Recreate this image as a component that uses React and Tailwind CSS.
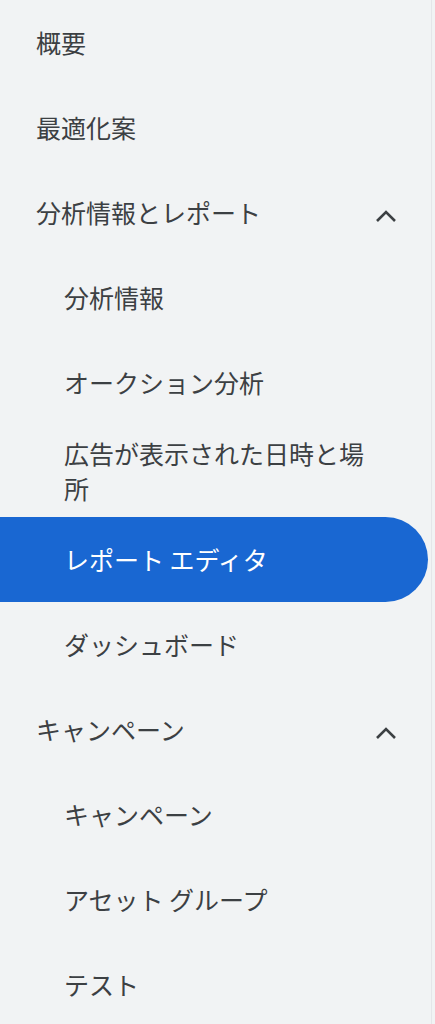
import React from "react";

const Chevron = () => (
  <svg width="24" height="24" viewBox="0 0 24 24" fill="none" stroke="#3c4043" strokeWidth="2.6" strokeLinecap="butt" strokeLinejoin="miter">
    <path d="M3 17l9-9 9 9" />
  </svg>
);

const font = { fontFamily: '"Noto Sans CJK JP", "Noto Sans", sans-serif' };

function Row({ label, sub, active, expand, tall }) {
  return (
    <div
      className={
        "flex items-center justify-between text-[25px] leading-[35px] " +
        (tall ? "h-[92px] " : "h-[85px] ") +
        (sub ? "pl-[64px] " : "pl-[36px] ") +
        (active ? "bg-[#1967d2] text-white rounded-r-full mr-[3px] " : "text-[#3c4043] ")
      }
    >
      <span className={tall ? "max-w-[310px]" : ""}>{label}</span>
      {expand && (
        <span className="mr-[33px] mt-[6px] flex items-center">
          <Chevron />
        </span>
      )}
    </div>
  );
}

export default function App() {
  return (
    <div className="min-h-screen w-[435px] bg-[#f1f3f4] flex" style={font}>
      <nav className="w-[432px] border-r border-[#e4e6e9] flex flex-col">
        <Row label="概要" />
        <Row label="最適化案" />
        <Row label="分析情報とレポート" expand />
        <Row label="分析情報" sub />
        <Row label="オークション分析" sub />
        <Row label="広告が表示された日時と場所" sub tall />
        <Row label="レポート エディタ" sub active />
        <Row label="ダッシュボード" sub />
        <Row label="キャンペーン" expand />
        <Row label="キャンペーン" sub />
        <Row label="アセット グループ" sub />
        <Row label="テスト" sub />
      </nav>
    </div>
  );
}
